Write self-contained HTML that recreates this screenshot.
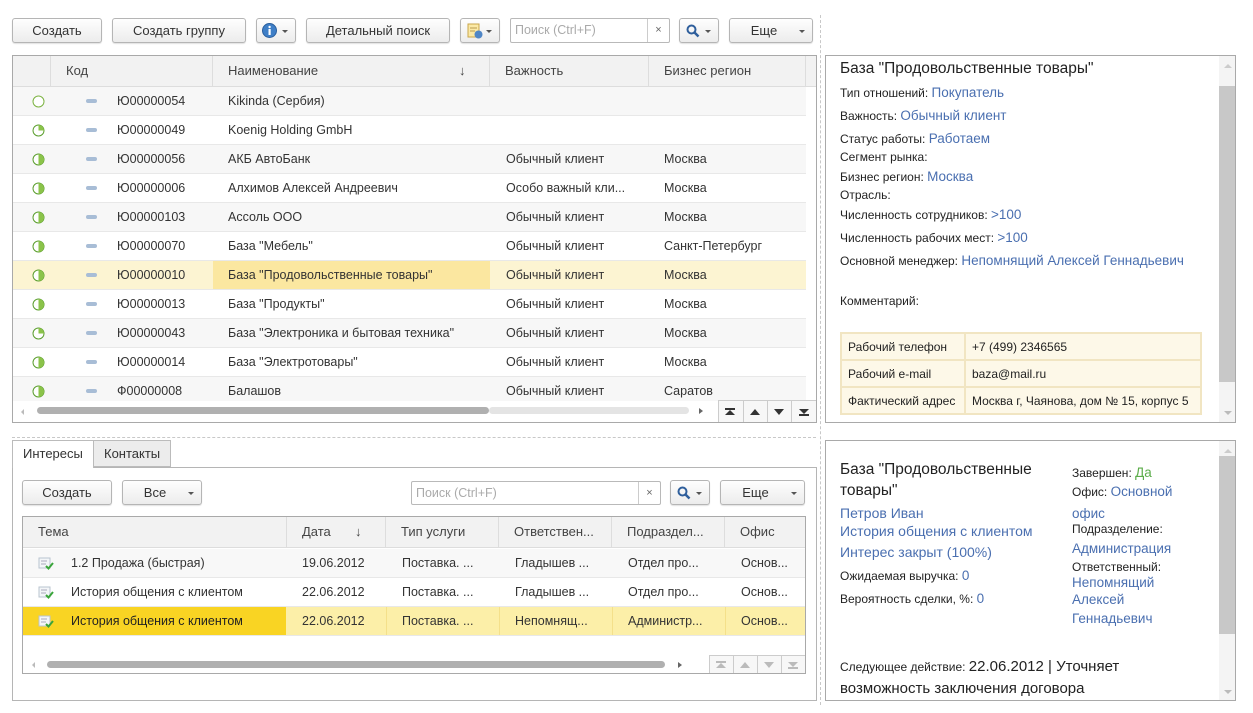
<!DOCTYPE html>
<html><head><meta charset="utf-8">
<style>
*{box-sizing:border-box;margin:0;padding:0}
body{width:1253px;height:713px;background:#fff;font-family:"Liberation Sans",Arial,sans-serif;font-size:12px;color:#333;position:relative;overflow:hidden}
.a{position:absolute}
.btn{position:absolute;height:25px;border:1px solid #b5b5b5;border-radius:3px;background:linear-gradient(#fefefe,#ececec);box-shadow:0 1px 1px rgba(0,0,0,.12);font-size:13px;color:#333;text-align:center;line-height:23px}
.dd{position:absolute;right:7px;top:11px;width:0;height:0;border-left:3px solid transparent;border-right:3px solid transparent;border-top:3px solid #555}
.inp{position:absolute;height:25px;border:1px solid #b9b9b9;border-radius:2px;background:#fff;color:#aaa;font-size:12.5px;line-height:23px;padding-left:4px}
.inp .x{position:absolute;right:0;top:0;width:22px;height:23px;border-left:1px solid #ccc;color:#666;text-align:center;font-size:11px}
.panel{position:absolute;border:1px solid #a9a9a9;background:#fff}
.hdr{position:absolute;background:#f2f2f2;border-bottom:1px solid #ddd;height:31px}
.hc{position:absolute;top:0;height:30px;line-height:30px;border-right:1px solid #ddd;padding-left:15px;color:#444;font-size:13px}
.row{position:absolute;height:29px;border-bottom:1px solid #e8e8e8;font-size:12.5px;color:#333;line-height:28px}
.row span{position:absolute;white-space:nowrap}
.lbl{font-size:12px;color:#222}
.lnk{color:#4a6fb0;font-size:13.5px}
.vs{position:absolute;border-left:1px dashed #c8c8c8}
.hs{position:absolute;border-top:1px dashed #c8c8c8}
</style></head><body>

<div class="vs" style="left:820px;top:15px;height:690px"></div>
<div class="hs" style="left:12px;top:437px;width:804px"></div>

<div class="btn" style="left:12px;top:18px;width:90px">Создать</div>
<div class="btn" style="left:112px;top:18px;width:134px">Создать группу</div>
<div class="btn" style="left:256px;top:18px;width:40px"><svg class="a" style="left:5px;top:4px" width="15" height="15"><circle cx="7.5" cy="7.5" r="7" fill="#3f7fc7"/><circle cx="7.5" cy="7.5" r="7" fill="none" stroke="#2b5f9e"/><rect x="6.5" y="6" width="2.2" height="6" fill="#fff"/><circle cx="7.6" cy="4" r="1.2" fill="#fff"/></svg><div class="dd"></div></div>
<div class="btn" style="left:306px;top:18px;width:144px">Детальный поиск</div>
<div class="btn" style="left:460px;top:18px;width:40px"><svg class="a" style="left:6px;top:4px" width="16" height="16"><rect x="1" y="1" width="11" height="13" fill="#fbe9a6" stroke="#c9a64a"/><line x1="3" y1="5" x2="10" y2="5" stroke="#b89a50"/><line x1="3" y1="8" x2="8" y2="8" stroke="#b89a50"/><circle cx="11.5" cy="11.5" r="4" fill="#4f86c6"/></svg><div class="dd"></div></div>
<div class="inp" style="left:510px;top:18px;width:160px">Поиск (Ctrl+F)<div class="x">×</div></div>
<div class="btn" style="left:679px;top:18px;width:40px"><svg class="a" style="left:6px;top:5px" width="14" height="14"><circle cx="5.5" cy="5.5" r="4" fill="none" stroke="#2f5f9c" stroke-width="2"/><line x1="8.5" y1="8.5" x2="12.5" y2="12.5" stroke="#2f5f9c" stroke-width="2.5"/></svg><div class="dd"></div></div>
<div class="btn" style="left:729px;top:18px;width:84px;padding-right:14px">Еще<div class="dd"></div></div>

<div class="panel" style="left:12px;top:55px;width:805px;height:368px;overflow:hidden">
 <div class="hdr" style="left:0;top:0;width:803px">
  <div class="hc" style="left:0;width:38px"></div>
  <div class="hc" style="left:38px;width:162px">Код</div>
  <div class="hc" style="left:200px;width:277px">Наименование<span class="a" style="left:246px;top:0">↓</span></div>
  <div class="hc" style="left:477px;width:159px">Важность</div>
  <div class="hc" style="left:636px;width:157px">Бизнес регион</div>
 </div>
 <div class="row" style="left:0;top:31px;width:793px;background:#f7f7f7"><svg class="a" style="left:19px;top:8px" width="13" height="13"><circle cx="6.5" cy="6.5" r="5.5" fill="#fff" stroke="#7cb342"/></svg><span style="left:73px;top:12px;width:11px;height:4px;background:#a8bdd6;border-radius:2px"></span><span style="left:104px">Ю00000054</span><span style="left:215px">Kikinda (Сербия)</span></div>
 <div class="row" style="left:0;top:60px;width:793px"><svg class="a" style="left:19px;top:8px" width="13" height="13"><circle cx="6.5" cy="6.5" r="5.5" fill="#fff" stroke="#5b9e2e"/><path d="M6.5 6.5V1A5.5 5.5 0 0 1 12 6.5Z" fill="#8bc34a"/></svg><span style="left:73px;top:12px;width:11px;height:4px;background:#a8bdd6;border-radius:2px"></span><span style="left:104px">Ю00000049</span><span style="left:215px">Koenig Holding GmbH</span></div>
 <div class="row" style="left:0;top:89px;width:793px;background:#f7f7f7"><svg class="a" style="left:19px;top:8px" width="13" height="13"><circle cx="6.5" cy="6.5" r="5.5" fill="#fff" stroke="#5b9e2e"/><path d="M6.5 1A5.5 5.5 0 0 1 6.5 12Z" fill="#8bc34a"/></svg><span style="left:73px;top:12px;width:11px;height:4px;background:#a8bdd6;border-radius:2px"></span><span style="left:104px">Ю00000056</span><span style="left:215px">АКБ АвтоБанк</span><span style="left:493px">Обычный клиент</span><span style="left:651px">Москва</span></div>
 <div class="row" style="left:0;top:118px;width:793px"><svg class="a" style="left:19px;top:8px" width="13" height="13"><circle cx="6.5" cy="6.5" r="5.5" fill="#fff" stroke="#5b9e2e"/><path d="M6.5 1A5.5 5.5 0 0 1 6.5 12Z" fill="#8bc34a"/></svg><span style="left:73px;top:12px;width:11px;height:4px;background:#a8bdd6;border-radius:2px"></span><span style="left:104px">Ю00000006</span><span style="left:215px">Алхимов Алексей Андреевич</span><span style="left:493px">Особо важный кли...</span><span style="left:651px">Москва</span></div>
 <div class="row" style="left:0;top:147px;width:793px;background:#f7f7f7"><svg class="a" style="left:19px;top:8px" width="13" height="13"><circle cx="6.5" cy="6.5" r="5.5" fill="#fff" stroke="#5b9e2e"/><path d="M6.5 1A5.5 5.5 0 0 1 6.5 12Z" fill="#8bc34a"/></svg><span style="left:73px;top:12px;width:11px;height:4px;background:#a8bdd6;border-radius:2px"></span><span style="left:104px">Ю00000103</span><span style="left:215px">Ассоль ООО</span><span style="left:493px">Обычный клиент</span><span style="left:651px">Москва</span></div>
 <div class="row" style="left:0;top:176px;width:793px"><svg class="a" style="left:19px;top:8px" width="13" height="13"><circle cx="6.5" cy="6.5" r="5.5" fill="#fff" stroke="#5b9e2e"/><path d="M6.5 1A5.5 5.5 0 0 1 6.5 12Z" fill="#8bc34a"/></svg><span style="left:73px;top:12px;width:11px;height:4px;background:#a8bdd6;border-radius:2px"></span><span style="left:104px">Ю00000070</span><span style="left:215px">База "Мебель"</span><span style="left:493px">Обычный клиент</span><span style="left:651px">Санкт-Петербург</span></div>
 <div class="row" style="left:0;top:205px;width:793px;background:#fcf4d2"><span style="left:200px;top:0;width:277px;height:28px;background:#fbe7a0"></span><svg class="a" style="left:19px;top:8px" width="13" height="13"><circle cx="6.5" cy="6.5" r="5.5" fill="#fff" stroke="#5b9e2e"/><path d="M6.5 1A5.5 5.5 0 0 1 6.5 12Z" fill="#8bc34a"/></svg><span style="left:73px;top:12px;width:11px;height:4px;background:#a8bdd6;border-radius:2px"></span><span style="left:104px">Ю00000010</span><span style="left:215px">База "Продовольственные товары"</span><span style="left:493px">Обычный клиент</span><span style="left:651px">Москва</span></div>
 <div class="row" style="left:0;top:234px;width:793px"><svg class="a" style="left:19px;top:8px" width="13" height="13"><circle cx="6.5" cy="6.5" r="5.5" fill="#fff" stroke="#5b9e2e"/><path d="M6.5 1A5.5 5.5 0 0 1 6.5 12Z" fill="#8bc34a"/></svg><span style="left:73px;top:12px;width:11px;height:4px;background:#a8bdd6;border-radius:2px"></span><span style="left:104px">Ю00000013</span><span style="left:215px">База "Продукты"</span><span style="left:493px">Обычный клиент</span><span style="left:651px">Москва</span></div>
 <div class="row" style="left:0;top:263px;width:793px;background:#f7f7f7"><svg class="a" style="left:19px;top:8px" width="13" height="13"><circle cx="6.5" cy="6.5" r="5.5" fill="#fff" stroke="#5b9e2e"/><path d="M6.5 6.5V1A5.5 5.5 0 0 1 12 6.5Z" fill="#8bc34a"/></svg><span style="left:73px;top:12px;width:11px;height:4px;background:#a8bdd6;border-radius:2px"></span><span style="left:104px">Ю00000043</span><span style="left:215px">База "Электроника и бытовая техника"</span><span style="left:493px">Обычный клиент</span><span style="left:651px">Москва</span></div>
 <div class="row" style="left:0;top:292px;width:793px"><svg class="a" style="left:19px;top:8px" width="13" height="13"><circle cx="6.5" cy="6.5" r="5.5" fill="#fff" stroke="#5b9e2e"/><path d="M6.5 1A5.5 5.5 0 0 1 6.5 12Z" fill="#8bc34a"/></svg><span style="left:73px;top:12px;width:11px;height:4px;background:#a8bdd6;border-radius:2px"></span><span style="left:104px">Ю00000014</span><span style="left:215px">База "Электротовары"</span><span style="left:493px">Обычный клиент</span><span style="left:651px">Москва</span></div>
 <div class="row" style="left:0;top:321px;width:793px;background:#f7f7f7;border:none"><svg class="a" style="left:19px;top:8px" width="13" height="13"><circle cx="6.5" cy="6.5" r="5.5" fill="#fff" stroke="#5b9e2e"/><path d="M6.5 1A5.5 5.5 0 0 1 6.5 12Z" fill="#8bc34a"/></svg><span style="left:73px;top:12px;width:11px;height:4px;background:#a8bdd6;border-radius:2px"></span><span style="left:104px">Ф00000008</span><span style="left:215px">Балашов</span><span style="left:493px">Обычный клиент</span><span style="left:651px">Саратов</span></div>
 <div class="a" style="left:0;top:345px;width:793px;height:21px;background:#fff"></div>
 <div class="a" style="left:8px;top:353px;border-top:3px solid transparent;border-bottom:3px solid transparent;border-right:3px solid #bbb"></div>
 <div class="a" style="left:24px;top:351px;width:452px;height:7px;border-radius:4px;background:#b0b0b0"></div>
 <div class="a" style="left:476px;top:351px;width:200px;height:7px;border-radius:4px;background:#e4e4e4"></div>
 <div class="a" style="left:686px;top:352px;border-top:3px solid transparent;border-bottom:3px solid transparent;border-left:4px solid #666"></div>
 <div class="a" style="left:705px;top:344px;width:99px;height:24px;border:1px solid #ccc;background:#f7f7f7"></div>
 <div class="a" style="left:730px;top:344px;height:24px;border-left:1px solid #ccc"></div>
 <div class="a" style="left:754px;top:344px;height:24px;border-left:1px solid #ccc"></div>
 <div class="a" style="left:778px;top:344px;height:24px;border-left:1px solid #ccc"></div>
 <div class="a" style="left:712px;top:352px;width:10px;height:2px;background:#333"></div><div class="a" style="left:712px;top:354px;border-left:5px solid transparent;border-right:5px solid transparent;border-bottom:5px solid #333"></div>
 <div class="a" style="left:737px;top:353px;border-left:5px solid transparent;border-right:5px solid transparent;border-bottom:6px solid #333"></div>
 <div class="a" style="left:761px;top:353px;border-left:5px solid transparent;border-right:5px solid transparent;border-top:6px solid #333"></div>
 <div class="a" style="left:786px;top:353px;border-left:5px solid transparent;border-right:5px solid transparent;border-top:5px solid #333"></div><div class="a" style="left:786px;top:358px;width:10px;height:2px;background:#333"></div>
</div>

<div class="panel" style="left:825px;top:55px;width:411px;height:368px;overflow:hidden">
 <div class="a" style="left:14px;top:4px;font-size:15.5px;color:#222">База "Продовольственные товары"</div>
 <div class="a" style="left:14px;top:29px"><span class="lbl">Тип отношений: </span><span class="lnk">Покупатель</span></div>
 <div class="a" style="left:14px;top:52px"><span class="lbl">Важность: </span><span class="lnk">Обычный клиент</span></div>
 <div class="a" style="left:14px;top:75px"><span class="lbl">Статус работы: </span><span class="lnk">Работаем</span></div>
 <div class="a lbl" style="left:14px;top:94px">Сегмент рынка:</div>
 <div class="a" style="left:14px;top:113px"><span class="lbl">Бизнес регион: </span><span class="lnk">Москва</span></div>
 <div class="a lbl" style="left:14px;top:132px">Отрасль:</div>
 <div class="a" style="left:14px;top:151px"><span class="lbl">Численность сотрудников: </span><span class="lnk">&gt;100</span></div>
 <div class="a" style="left:14px;top:174px"><span class="lbl">Численность рабочих мест: </span><span class="lnk">&gt;100</span></div>
 <div class="a" style="left:14px;top:197px"><span class="lbl">Основной менеджер: </span><span class="lnk">Непомнящий Алексей Геннадьевич</span></div>
 <div class="a lbl" style="left:14px;top:238px">Комментарий:</div>
 <table class="a" style="left:14px;top:276px;border-collapse:collapse;font-size:12px;color:#222;background:#fdf8e8">
  <tr style="height:27px"><td style="border:2px solid #f1e5c2;width:124px;padding-left:6px">Рабочий телефон</td><td style="border:2px solid #f1e5c2;width:236px;padding-left:6px">+7 (499) 2346565</td></tr>
  <tr style="height:27px"><td style="border:2px solid #f1e5c2;padding-left:6px">Рабочий e-mail</td><td style="border:2px solid #f1e5c2;padding-left:6px">baza@mail.ru</td></tr>
  <tr style="height:27px"><td style="border:2px solid #f1e5c2;padding-left:6px">Фактический адрес</td><td style="border:2px solid #f1e5c2;padding-left:6px">Москва г, Чаянова, дом № 15, корпус 5</td></tr>
 </table>
 <div class="a" style="left:393px;top:0;width:17px;height:366px;background:#f4f4f4"></div>
 <div class="a" style="left:393px;top:30px;width:17px;height:296px;background:#c8c8c8"></div>
 <div class="a" style="left:398px;top:8px;border-left:4px solid transparent;border-right:4px solid transparent;border-bottom:4px solid #ccc"></div>
 <div class="a" style="left:398px;top:355px;border-left:4px solid transparent;border-right:4px solid transparent;border-top:4px solid #bbb"></div>
</div>

<div class="a" style="left:12px;top:440px;width:82px;height:28px;border:1px solid #bbb;border-bottom:none;background:#fff;font-size:13px;line-height:26px;padding-left:10px;z-index:2">Интересы</div>
<div class="a" style="left:94px;top:440px;width:77px;height:27px;border:1px solid #bbb;border-left:none;background:#ececec;font-size:13px;line-height:26px;padding-left:10px">Контакты</div>
<div class="panel" style="left:12px;top:467px;width:805px;height:234px;border-color:#b5b5b5"></div>

<div class="btn" style="left:22px;top:480px;width:90px">Создать</div>
<div class="btn" style="left:122px;top:480px;width:80px;padding-right:14px">Все<div class="dd"></div></div>
<div class="inp" style="left:411px;top:481px;width:250px;height:24px">Поиск (Ctrl+F)<div class="x" style="height:22px">×</div></div>
<div class="btn" style="left:670px;top:480px;width:40px"><svg class="a" style="left:6px;top:5px" width="14" height="14"><circle cx="5.5" cy="5.5" r="4" fill="none" stroke="#2f5f9c" stroke-width="2"/><line x1="8.5" y1="8.5" x2="12.5" y2="12.5" stroke="#2f5f9c" stroke-width="2.5"/></svg><div class="dd"></div></div>
<div class="btn" style="left:720px;top:480px;width:85px;padding-right:14px">Еще<div class="dd"></div></div>

<div class="panel" style="left:22px;top:516px;width:784px;height:158px;overflow:hidden">
 <div class="hdr" style="left:0;top:0;width:782px">
  <div class="hc" style="left:0;width:264px">Тема</div>
  <div class="hc" style="left:264px;width:99px">Дата<span class="a" style="left:68px;top:0">↓</span></div>
  <div class="hc" style="left:363px;width:113px">Тип услуги</div>
  <div class="hc" style="left:476px;width:113px">Ответствен...</div>
  <div class="hc" style="left:589px;width:113px">Подраздел...</div>
  <div class="hc" style="left:702px;width:80px;border:none">Офис</div>
 </div>
 <div class="row" style="left:0;top:32px;width:782px;background:#f8f8f8"><svg class="a" style="left:15px;top:8px" width="16" height="14"><rect x="1" y="1" width="11" height="10" fill="#f4f6f8" stroke="#b9c4cf"/><line x1="3" y1="4" x2="9" y2="4" stroke="#aab"/><line x1="3" y1="7" x2="8" y2="7" stroke="#aab"/><path d="M8 9l2.5 2.5L15 6" fill="none" stroke="#3aa53a" stroke-width="2"/></svg><span style="left:48px">1.2 Продажа (быстрая)</span><span style="left:279px">19.06.2012</span><span style="left:379px">Поставка. ...</span><span style="left:492px">Гладышев ...</span><span style="left:605px">Отдел про...</span><span style="left:718px">Основ...</span></div>
 <div class="row" style="left:0;top:61px;width:782px"><svg class="a" style="left:15px;top:8px" width="16" height="14"><rect x="1" y="1" width="11" height="10" fill="#f4f6f8" stroke="#b9c4cf"/><line x1="3" y1="4" x2="9" y2="4" stroke="#aab"/><line x1="3" y1="7" x2="8" y2="7" stroke="#aab"/><path d="M8 9l2.5 2.5L15 6" fill="none" stroke="#3aa53a" stroke-width="2"/></svg><span style="left:48px">История общения с клиентом</span><span style="left:279px">22.06.2012</span><span style="left:379px">Поставка. ...</span><span style="left:492px">Гладышев ...</span><span style="left:605px">Отдел про...</span><span style="left:718px">Основ...</span></div>
 <div class="row" style="left:0;top:90px;width:782px;background:#fcefa8"><span style="left:0;top:0;width:263px;height:28px;background:#f9d423"></span><span style="left:363px;top:0;height:28px;border-left:1px solid #f4e08a"></span><span style="left:476px;top:0;height:28px;border-left:1px solid #f4e08a"></span><span style="left:589px;top:0;height:28px;border-left:1px solid #f4e08a"></span><span style="left:702px;top:0;height:28px;border-left:1px solid #f4e08a"></span><svg class="a" style="left:15px;top:8px" width="16" height="14"><rect x="1" y="1" width="11" height="10" fill="#f4f6f8" stroke="#b9c4cf"/><line x1="3" y1="4" x2="9" y2="4" stroke="#aab"/><line x1="3" y1="7" x2="8" y2="7" stroke="#aab"/><path d="M8 9l2.5 2.5L15 6" fill="none" stroke="#3aa53a" stroke-width="2"/></svg><span style="left:48px;color:#222">История общения с клиентом</span><span style="left:279px">22.06.2012</span><span style="left:379px">Поставка. ...</span><span style="left:492px">Непомнящ...</span><span style="left:605px">Администр...</span><span style="left:718px">Основ...</span></div>
 <div class="a" style="left:9px;top:145px;border-top:3px solid transparent;border-bottom:3px solid transparent;border-right:3px solid #bbb"></div>
 <div class="a" style="left:24px;top:144px;width:618px;height:7px;border-radius:4px;background:#b0b0b0"></div>
 <div class="a" style="left:655px;top:145px;border-top:3px solid transparent;border-bottom:3px solid transparent;border-left:4px solid #666"></div>
 <div class="a" style="left:686px;top:138px;width:97px;height:20px;border:1px solid #ccc;background:#f7f7f7"></div>
 <div class="a" style="left:710px;top:138px;height:20px;border-left:1px solid #ccc"></div>
 <div class="a" style="left:734px;top:138px;height:20px;border-left:1px solid #ccc"></div>
 <div class="a" style="left:758px;top:138px;height:20px;border-left:1px solid #ccc"></div>
 <div class="a" style="left:693px;top:144px;width:10px;height:2px;background:#bbb"></div><div class="a" style="left:693px;top:146px;border-left:5px solid transparent;border-right:5px solid transparent;border-bottom:5px solid #bbb"></div>
 <div class="a" style="left:717px;top:145px;border-left:5px solid transparent;border-right:5px solid transparent;border-bottom:6px solid #bbb"></div>
 <div class="a" style="left:741px;top:145px;border-left:5px solid transparent;border-right:5px solid transparent;border-top:6px solid #bbb"></div>
 <div class="a" style="left:765px;top:145px;border-left:5px solid transparent;border-right:5px solid transparent;border-top:5px solid #bbb"></div><div class="a" style="left:765px;top:150px;width:10px;height:2px;background:#bbb"></div>
</div>

<div class="panel" style="left:825px;top:440px;width:411px;height:261px;overflow:hidden">
 <div class="a" style="left:14px;top:18px;width:220px;font-size:15.5px;line-height:21px;color:#222">База "Продовольственные товары"</div>
 <div class="a lnk" style="left:14px;top:64px;font-size:14px">Петров Иван</div>
 <div class="a lnk" style="left:14px;top:82px;font-size:14px">История общения с клиентом</div>
 <div class="a lnk" style="left:14px;top:103px;font-size:14px">Интерес закрыт (100%)</div>
 <div class="a" style="left:14px;top:127px"><span class="lbl">Ожидаемая выручка: </span><span class="lnk">0</span></div>
 <div class="a" style="left:14px;top:150px"><span class="lbl">Вероятность сделки, %: </span><span class="lnk">0</span></div>
 <div class="a" style="left:246px;top:24px"><span class="lbl">Завершен: </span><span style="color:#5cad4a;font-size:13.5px">Да</span></div>
 <div class="a" style="left:246px;top:40px;width:115px;line-height:21px"><span class="lbl">Офис: </span><span class="lnk">Основной офис</span></div>
 <div class="a lbl" style="left:246px;top:81px">Подразделение:</div>
 <div class="a lnk" style="left:246px;top:100px">Администрация</div>
 <div class="a lbl" style="left:246px;top:119px">Ответственный:</div>
 <div class="a lnk" style="left:246px;top:133px;line-height:17px;width:120px">Непомнящий Алексей</div>
 <div class="a lnk" style="left:246px;top:170px">Геннадьевич</div>
 <div class="a" style="left:14px;top:215px;width:320px;line-height:21px;color:#222;font-size:15px"><span class="lbl">Следующее действие: </span>22.06.2012 | Уточняет возможность заключения договора</div>
 <div class="a" style="left:393px;top:0;width:17px;height:259px;background:#f4f4f4"></div>
 <div class="a" style="left:393px;top:15px;width:17px;height:178px;background:#c8c8c8"></div>
 <div class="a" style="left:398px;top:8px;border-left:4px solid transparent;border-right:4px solid transparent;border-bottom:4px solid #ccc"></div>
 <div class="a" style="left:398px;top:249px;border-left:4px solid transparent;border-right:4px solid transparent;border-top:4px solid #bbb"></div>
</div>
</body></html>
